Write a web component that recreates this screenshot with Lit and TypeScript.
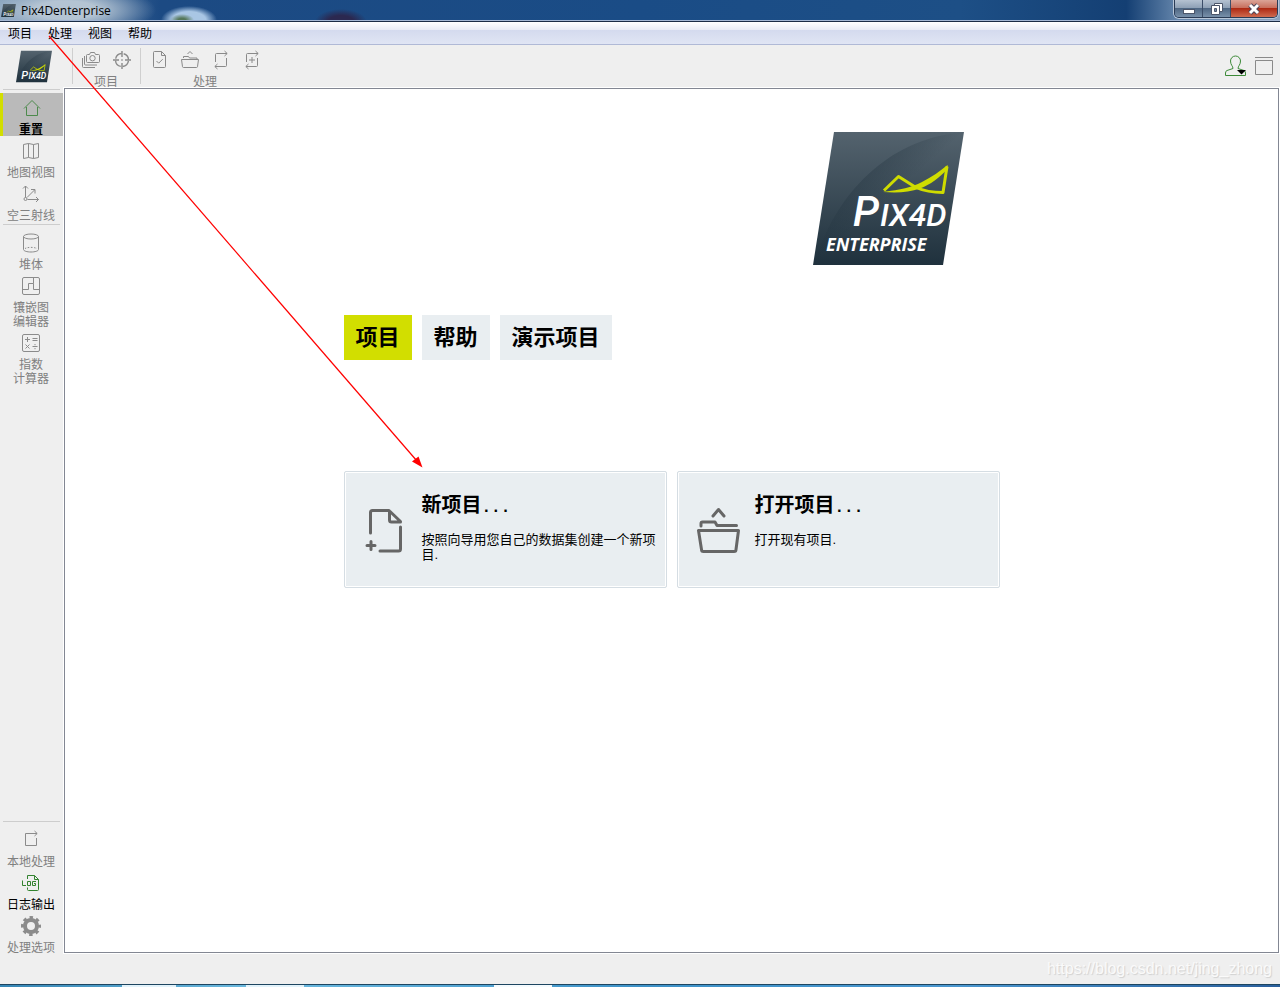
import { LitElement, html, css, svg, nothing } from "lit";
import { customElement, state } from "lit/decorators.js";
import { classMap } from "lit/directives/class-map.js";

/* Line icons, all drawn on a 20 x 20 grid. */
const icons: Record<string, unknown> = {
  camera: svg`<path d="M6.500 4.500h2l1-2h4l1 2h3a1 1 0 0 1 1 1v6a1 1 0 0 1-1 1h-11a1 1 0 0 1-1-1v-6a1 1 0 0 1 1-1z"/><circle cx="11.500" cy="8.200" r="2.700"/><path d="M3.500 6v8a1 1 0 0 0 1 1h11.500M1.500 8v8.500a1 1 0 0 0 1 1H14"/>`,
  target: svg`<circle cx="10" cy="10" r="6.500" stroke-width="1.400" stroke-dasharray="8.200 2" stroke-dashoffset="-1"/><path stroke-width="1.400" d="M10 1v6M10 13v6M1 10h6M13 10h6M9.300 10h1.400"/>`,
  docCheck: svg`<path d="M12.500 1.500h-7a1 1 0 0 0-1 1v14a1 1 0 0 0 1 1h10a1 1 0 0 0 1-1v-11zM12.500 1.500v4h4M7.500 11l2.200 2.200 4-4"/>`,
  folder: svg`<path d="M7.500 4l2.500-2.500 2.500 2.500M3.500 8V6.500h5l1 1.500h7.500v1M1.500 9.500h17l-1 7.200a1 1 0 0 1-1 .8h-13a1 1 0 0 1-1-.8z"/>`,
  loop: svg`<path d="M4.500 12V4.500a1 1 0 0 1 1-1H16M13.500 1l2.700 2.500-2.700 2.500M15.500 8v7.500a1 1 0 0 1-1 1H4M6.500 14l-2.700 2.500 2.700 2.500"/>`,
  loopPlus: svg`<path d="M4.500 12V4.500a1 1 0 0 1 1-1H16M13.500 1l2.700 2.500-2.700 2.500M15.500 8v7.500a1 1 0 0 1-1 1H4M6.500 14l-2.700 2.500 2.700 2.500M10 7v6M7 10h6"/>`,
  home: svg`<path d="M3 10.500l8-8 8 8M5.500 9v8.500h11V9"/>`,
  map: svg`<path d="M2.500 3.500l5-1 5 1 5-1v14l-5 1-5-1-5 1zM7.500 2.500v14M12.500 3.500v14"/>`,
  rays: svg`<circle cx="4.500" cy="15" r="1.500"/><path d="M4.500 13.500V2M2 4.500l2.500-2.500L7 4.500M6.500 15.500H17.500M15 13l2.500 2.500L15 18M6 13.500l7.500-7.500M10 5.500h4V9.500"/>`,
  volume: svg`<ellipse cx="10" cy="3.500" rx="7.500" ry="2.500"/><path d="M2.500 3.500v13c0 1.500 3.500 2.500 7.500 2.500s7.500-1 7.500-2.500v-13"/><path d="M4 15.500c3-1.500 9-1.500 12 0" stroke-dasharray="1.500 1.500"/>`,
  mosaic: svg`<rect x="1.500" y="1.500" width="17" height="17" rx="1.500"/><path d="M1.500 13.500h6v-6h5v6h6M12.500 7.500v-6"/>`,
  calc: svg`<rect x="1.500" y="1.500" width="17" height="17" rx="1.500"/><path d="M4 6.500h5M6.500 4v5M11.500 5.500h5M11.500 7.500h5M4.500 11.500l4 4M8.500 11.500l-4 4M11.500 13.500h5M14 11v1.200M14 15v1.200"/>`,
  local: svg`<path d="M11 3.500H4.500v12h11V8M8.500 3.500H16M13.500 1l2.700 2.500L13.500 6"/>`,
  log: svg`<path d="M6.500 6V2.500h7l4 4v10a1 1 0 0 1-1 1h-9a1 1 0 0 1-1-1V14.500M13.500 2.500v4h4M1.500 7.500v5h3.500M6.500 8.500h3v4h-3zM15 8.500h-3.500v4h3v-2h-1.500"/>`,
  gear: svg`<circle cx="10" cy="10" r="6" stroke-width="4"/><circle cx="10" cy="10" r="8.500" stroke-width="3" stroke-dasharray="3.400 3.276" stroke-dashoffset="1.700"/>`,
};

const icon = (name: string) => html`
  <svg class="icon" viewBox="0 0 20 20" width="20" height="20" aria-hidden="true">${icons[name]}</svg>
`;

const wing = svg`
  <path d="M71 58.500L85.500 44.500 103 55.500C111 59 121 60.500 130 60.500L134 34.500" fill="none" stroke="#cfdc00" stroke-width="3" stroke-linejoin="round"/>
  <path d="M70 60C88 57.500 98 55.500 109 50C119 45 127 39 134.500 33L135 36.500C127 45 117 53 107 56.500C96 60.500 84 61 70 60z" fill="#cfdc00"/>
`;

const logo = (large: boolean) => html`
  <svg class=${large ? "logo" : "mark"} viewBox="0 0 151 133" role="img" aria-label="Pix4D">
    <defs>
      <linearGradient id="slate" x1="0" y1="0" x2="0" y2="1">
        <stop offset="0" stop-color="#54636e"/><stop offset="1" stop-color="#1f313d"/>
      </linearGradient>
      <linearGradient id="shade" x1="0" y1="0" x2="1" y2="1">
        <stop offset="0.250" stop-color="#1c2d39" stop-opacity="0.450"/><stop offset="0.500" stop-color="#1c2d39" stop-opacity="0"/>
      </linearGradient>
    </defs>
    <path d="M21 0H151L130 133H0z" fill="url(#slate)"/>
    <path d="M150 1C80 4 22 60 2 131L0 133H130L151 0z" fill="url(#shade)"/>
    ${large
      ? svg`${wing}
          <text class="brand" x="40" y="94" font-size="42">P</text>
          <text class="brand" x="67" y="94" font-size="32">IX4D</text>
          <text class="edition" x="13" y="119" font-size="18">ENTERPRISE</text>`
      : svg`<g transform="translate(-12 24)">${wing}</g>
          <text class="brand" x="22" y="118" font-size="46">P</text>
          <text class="brand" x="52" y="118" font-size="36">IX4D</text>`}
  </svg>
`;

type Item = { label: string[]; icon: string; kind?: "active" | "live" };

const upper: Item[] = [
  { label: ["重置"], icon: "home", kind: "active" },
  { label: ["地图视图"], icon: "map" },
  { label: ["空三射线"], icon: "rays" },
];
const middle: Item[] = [
  { label: ["堆体"], icon: "volume" },
  { label: ["镶嵌图", "编辑器"], icon: "mosaic" },
  { label: ["指数", "计算器"], icon: "calc" },
];
const lower: Item[] = [
  { label: ["本地处理"], icon: "local" },
  { label: ["日志输出"], icon: "log", kind: "live" },
  { label: ["处理选项"], icon: "gear" },
];
const tools = [
  { label: "项目", icons: ["camera", "target"] },
  { label: "处理", icons: ["docCheck", "folder", "loop", "loopPlus"] },
];

@customElement("app-root")
export class AppRoot extends LitElement {
  @state() private tab = 0;

  static styles = css`
    :host {
      display: flex;
      flex-direction: column;
      position: relative;
      min-height: 100vh;
      overflow: hidden;
      background: #efefef;
      color: #000;
      font: 12px/14px "Liberation Sans", "Noto Sans CJK SC", sans-serif;
    }
    * { box-sizing: border-box; }
    button {
      margin: 0;
      padding: 0;
      border: 0;
      background: none;
      color: inherit;
      font: inherit;
    }
    .icon { display: block; fill: none; stroke: currentColor; stroke-width: 1; }

    .titlebar {
      display: flex;
      align-items: flex-start;
      justify-content: space-between;
      height: 22px;
      border-bottom: 1px solid #1b2c45;
      box-shadow: inset 0 -1px #a3b6d3;
      background:
        radial-gradient(ellipse 26px 13px at 341px 22px, #2b2850 50%, transparent),
        radial-gradient(ellipse 12px 6px at 182px 20px, #55775a 30%, transparent),
        radial-gradient(ellipse 28px 14px at 189px 20px, #a9c6e4 60%, transparent),
        radial-gradient(ellipse 90px 26px at 66px 10px, #b4c4d3 35%, transparent),
        linear-gradient(90deg, #7d9bb9, #1c4a83 160px, #1a4c86 50%, #1d4f86 75%, #143f73 88%, #6485ab 92%, #8aa3be);
    }
    .caption { display: flex; align-items: center; gap: 5px; padding-left: 1px; height: 21px; }
    .caption .mark { width: 15px; height: 13px; }
    .caption h1 { margin: 0; font: 12px/20px "Open Sans", "Noto Sans", sans-serif; }
    .controls {
      display: flex;
      margin-right: 2px;
      border: 1px solid #2a3b55;
      border-top: 0;
      border-radius: 0 0 5px 5px;
      box-shadow: 0 0 0 1px #b8c6d8;
      overflow: hidden;
    }
    .controls button {
      display: grid;
      place-items: center;
      width: 28px;
      height: 17px;
      border-right: 1px solid #3b4d68;
      background: linear-gradient(#b5c2d1, #8fa1b6 45%, #4f6783 50%, #7890aa);
    }
    .controls .close { width: 46px; border: 0; background: linear-gradient(#dba497, #c8705e 45%, #ae2a14 50%, #cf6a4e); }

    .menu {
      display: flex;
      height: 23px;
      border-bottom: 1px solid #b0b9d6;
      background: linear-gradient(#fff, #e8ebf5 8px, #d4daee 8px, #e0e5f4);
    }
    .menu button { width: 40px; padding-top: 1px; }

    .toolbar { display: flex; height: 43px; }
    .brandbox { display: grid; place-items: center; width: 72px; padding: 0 4px 1px 0; }
    .brandbox .mark { width: 36px; height: 33px; }
    .group {
      display: flex;
      flex-direction: column;
      align-items: center;
      margin: 3px 0 0;
      padding: 0 3px 0 2px;
      border-left: 1px solid #cfcfcf;
      height: 36px;
      color: #8a8a8a;
    }
    .row { display: flex; padding-top: 2px; }
    .row button { display: grid; place-items: center; width: 31px; height: 20px; }
    .group span { padding-top: 5px; color: #808080; }
    .account { display: flex; align-items: center; gap: 8px; margin-left: auto; padding: 0 7px 2px 0; }
    .account svg { display: block; }

    .work { display: flex; flex: 1; }
    .side { display: flex; flex-direction: column; width: 64px; padding-right: 1px; }
    .side hr { width: 57px; height: 1px; margin: 2px 3px 3px; border: 0; background: #cdcdcd; }
    .side hr:first-child { margin-top: 1px; }
    .side hr.push { margin-top: auto; }
    .item {
      display: flex;
      flex-direction: column;
      align-items: center;
      padding-top: 5px;
      color: #8b8b8b;
    }
    .item span { display: block; margin-bottom: -1px; padding: 5px 1px 0 0; color: #808080; white-space: nowrap; }
    .item .icon { margin-right: 1px; }
    .active { background: #bababa; box-shadow: inset 3px 0 #d2de00; color: #4d8a4c; }
    .active span { color: #000; font-weight: bold; }
    .live { color: #33822f; }
    .live span { color: #000; }

    main {
      flex: 1;
      margin: 0 1px 1px 0;
      padding: 43px 20px;
      border: 1px solid #838793;
      box-shadow: 0 0 0 1px #fff;
      background: #fff;
    }
    .page { max-width: 656px; margin: 0 auto; }
    .logo { display: block; width: 151px; height: 133px; margin: 0 36px 50px auto; }
    .brand { fill: #fff; font-family: Roboto, sans-serif; font-style: italic; font-weight: 500; }
    .edition { fill: #fff; font-family: "Open Sans", "Noto Sans", sans-serif; font-style: italic; font-weight: 700; }
    .tabs { display: flex; gap: 10px; margin-bottom: 111px; }
    .tabs button { height: 45px; padding: 1px 12px 0; background: #e9eef1; font-size: 22px; font-weight: bold; line-height: 44px; }
    .tabs .on { background: #d2de00; }
    .cards { display: grid; grid-template-columns: 1fr 1fr; gap: 10px; }
    .card {
      display: flex;
      align-items: flex-start;
      min-height: 117px;
      padding: 20px 9px 20px 16px;
      border: 1px solid #d5dde3;
      border-radius: 2px;
      box-shadow: inset 0 0 0 1px #fff;
      background: #e9eef1;
      text-align: left;
    }
    .card svg { flex: none; width: 48px; height: 48px; margin: 15px 13px 0 0; fill: none; stroke: #666; stroke-width: 3; stroke-linecap: round; stroke-linejoin: round; }
    .card h2 { margin: 0 0 14px; font-size: 20px; line-height: 26px; }
    .dots { font: bold 16px/16px "Liberation Mono", monospace; }
    .card p { margin: 0; font-size: 13px; line-height: 15px; }

    footer { height: 30px; padding: 6px 8px; color: #fafafa; font-size: 16px; line-height: 18px; text-align: right; text-shadow: 1px 1px 1px #d0d0d0; }
    .taskbar {
      height: 3px;
      border-top: 1px solid #1d4560;
      background:
        linear-gradient(#e2f2fa, #e2f2fa) 122px 0 / 54px 3px no-repeat,
        linear-gradient(#e2f2fa, #e2f2fa) 246px 0 / 58px 3px no-repeat,
        linear-gradient(#f4fafd, #f4fafd) 494px 0 / 58px 3px no-repeat,
        linear-gradient(90deg, #3585b4, #6dbbe0 20%, #3d92c8 50%, #4a97d0 75%, #2a5f9c);
    }
    .arrow { position: absolute; top: 0; left: 0; pointer-events: none; }
  `;

  private item = (it: Item) => html`
    <button class=${classMap({ item: true, active: it.kind === "active", live: it.kind === "live" })}>
      ${icon(it.icon)}
      <span>${it.label.map((line, i) => html`${i ? html`<br />` : nothing}${line}`)}</span>
    </button>
  `;

  render() {
    return html`
      <header class="titlebar">
        <div class="caption">${logo(false)}<h1>Pix4Denterprise</h1></div>
        <div class="controls">
          <button aria-label="最小化"><svg width="14" height="12"><rect x="1.500" y="6.500" width="11" height="4" fill="#fff" stroke="#4c566a"/></svg></button>
          <button aria-label="还原"><svg width="14" height="14"><path d="M4.500 1.500h8v8h-8z" fill="#fff" stroke="#4c566a"/><path d="M1.500 3.500h8v9h-8z" fill="#fff" stroke="#4c566a"/><path d="M4.500 6.500h2v3h-2z" fill="#7890aa" stroke="#4c566a"/></svg></button>
          <button class="close" aria-label="关闭"><svg width="14" height="12"><path d="M3 2l8 8M11 2l-8 8" stroke="#4c4658" stroke-width="5"/><path d="M3 2l8 8M11 2l-8 8" stroke="#fff" stroke-width="3"/></svg></button>
        </div>
      </header>
      <nav class="menu">${["项目", "处理", "视图", "帮助"].map((m) => html`<button>${m}</button>`)}</nav>
      <div class="toolbar">
        <div class="brandbox">${logo(false)}</div>
        ${tools.map((g) => html`
          <div class="group">
            <div class="row">${g.icons.map((n) => html`<button aria-label=${g.label}>${icon(n)}</button>`)}</div>
            <span>${g.label}</span>
          </div>`)}
        <div class="account">
          <button aria-label="账户">
            <svg width="22" height="22" fill="none" stroke="#3c8a38"><path d="M8 13.500C8 11 5.500 10 5.500 6a5 5 0 0 1 10 0C15.500 10 13 11 13 13.500L19 15.500Q20.500 16 20.500 18V20.500H.5V18Q.5 16 2 15.500z"/><path d="M12 15h9l-4.500 4.500z" fill="#000" stroke="none"/></svg>
          </button>
          <button aria-label="布局">
            <svg width="18" height="20" fill="none" stroke="#8a8a8a"><path d="M0 1.500h18M.5 4.500h17v14H.5z"/></svg>
          </button>
        </div>
      </div>
      <div class="work">
        <nav class="side">
          <hr />${upper.map(this.item)}
          <hr />${middle.map(this.item)}
          <hr class="push" />${lower.map(this.item)}
        </nav>
        <main>
          <div class="page">
            ${logo(true)}
            <div class="tabs">
              ${["项目", "帮助", "演示项目"].map((t, i) => html`
                <button class=${classMap({ on: this.tab === i })} @click=${() => (this.tab = i)}>${t}</button>`)}
            </div>
            <div class="cards">
              <button class="card">
                <svg viewBox="0 0 48 48" aria-hidden="true"><path d="M9.500 26V5.500a2 2 0 0 1 2-2H28L39.500 14.500M28.500 4v9a2 2 0 0 0 2 2h9M39.500 20v22a2 2 0 0 1-2 2H19M6 38.500h8M10 34.500v8"/></svg>
                <div><h2>新项目<span class="dots">...</span></h2><p>按照向导用您自己的数据集创建一个新项目.</p></div>
              </button>
              <button class="card">
                <svg viewBox="0 0 48 48" aria-hidden="true"><path d="M19 9l5.500-6.500L30 9M7 19v-2.500a1.500 1.500 0 0 1 1.500-1.500H21l2 3.500H42.500M4.500 23.500H44.500L42 42.500a2 2 0 0 1-2 2H9.500a2 2 0 0 1-2-2z"/></svg>
                <div><h2>打开项目<span class="dots">...</span></h2><p>打开现有项目.</p></div>
              </button>
            </div>
          </div>
        </main>
      </div>
      <footer>https://blog.csdn.net/jing_zhong</footer>
      <div class="taskbar"></div>
      <svg class="arrow" width="430" height="475" aria-hidden="true">
        <path d="M49 36L417 461" stroke="#f00" stroke-width="1.200"/><path d="M422.500 467.500L412 461.500 418.500 456.500z" fill="#f00"/>
      </svg>
    `;
  }
}
